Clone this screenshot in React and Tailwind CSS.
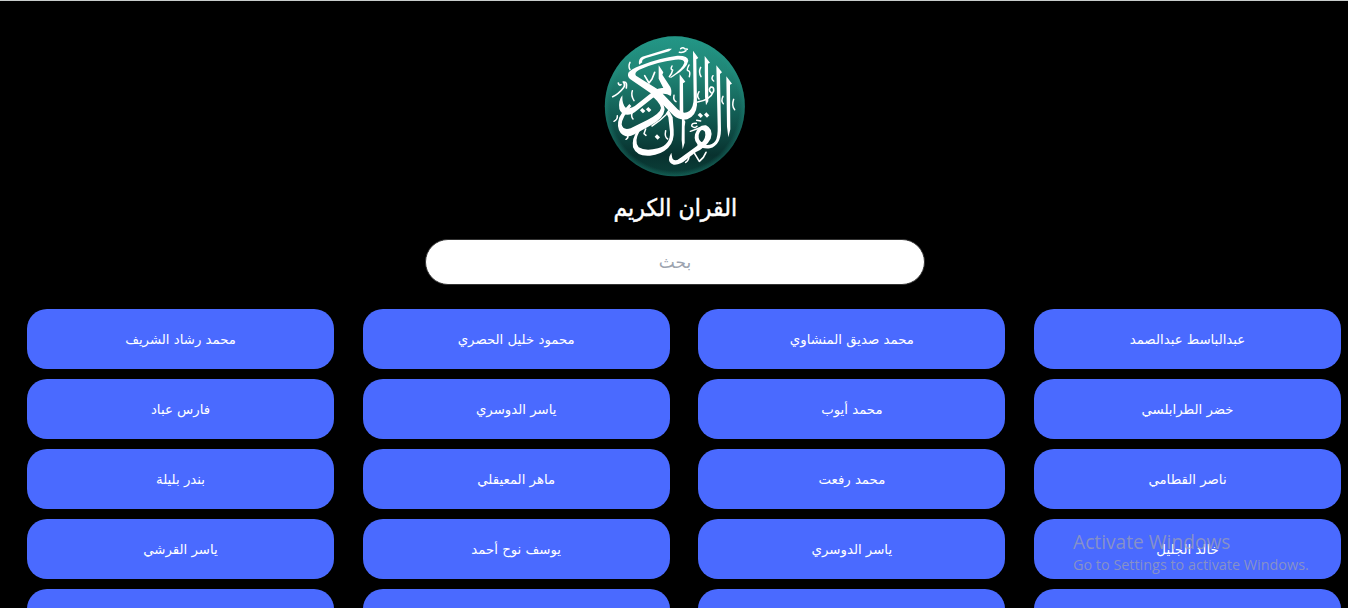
const rows = [
  ['عبدالباسط عبدالصمد', 'محمد صديق المنشاوي', 'محمود خليل الحصري', 'محمد رشاد الشريف'],
  ['خضر الطرابلسي', 'محمد أيوب', 'ياسر الدوسري', 'فارس عباد'],
  ['ناصر القطامي', 'محمد رفعت', 'ماهر المعيقلي', 'بندر بليلة'],
  ['خالد الجليل', 'ياسر الدوسري', 'يوسف نوح أحمد', 'ياسر القرشي'],
  ['', '', '', ''],
];

function Logo() {
  return (
    <svg viewBox="0 0 450 450" className="h-[150px] w-[150px]" role="img" aria-label="القران الكريم">
      <defs>
        <linearGradient id="disc" x1="0" y1="0" x2="0" y2="1">
          <stop offset="0" stopColor="#239686" />
          <stop offset="0.25" stopColor="#208676" />
          <stop offset="0.55" stopColor="#125d54" />
          <stop offset="0.85" stopColor="#08322f" />
          <stop offset="1" stopColor="#0b4039" />
        </linearGradient>
        <radialGradient id="rim">
          <stop offset="0.92" stopColor="#239686" stopOpacity="0" />
          <stop offset="1" stopColor="#239686" stopOpacity="0.35" />
        </radialGradient>
      </defs>
      <circle cx="224.5" cy="229" r="210" fill="url(#disc)" />
      <circle cx="224.5" cy="229" r="210" fill="url(#rim)" />
      <g fill="#fff">
        <path d="M279 62L295 84 289 88 291 225Q288 258 262 268 240 273 220 256L160 195 90 147Q80 138 86 127 92 118 120 107 180 83 232 77 264 76 265 92 260 115 226 135 211 147 210 142 248 116 253 98 252 86 226 89 170 95 118 119 101 128 108 137L178 181 233 238Q251 255 268 243 281 232 281 205Z" />
        <path d="M314 78L330 98 324 101 325 214 318 226 315 200Z" />
        <path d="M349 106L366 127 360 132 363 300Q362 346 330 355 307 358 290 345L299 340Q332 352 346 333 354 320 353 290Z" />
        <path d="M379 139L396 161 390 164 391 298 385 322 381 290Z" />
        <path d="M239 133L256 155 249 160 250 268 239 256Z" />
        <path d="M246 258L256 275 254 290 254 338 248 358 245 330Z" />
        <path d="M206 240L218 262 221 300Q224 335 204 354 183 374 150 377 110 380 99 352 95 325 113 301L119 303Q101 335 116 352 136 365 174 355 212 344 210 305L205 262 199 250Z" />
        <path d="M176 106L190 127 187 134 211 171Q217 184 212 198 190 184 163 200L104 247Q84 261 66 249 54 239 58 215 61 203 67 196 66 225 78 234 92 239 112 222L162 182Q177 172 190 174L176 146Z" />
        <path d="M155 184Q190 200 194 238 191 268 150 287L104 313Q79 327 62 309 48 291 58 262 68 242 88 222L94 228Q66 262 65 283 68 302 92 295L142 270Q181 250 183 234 178 214 152 196Z" />
        <path d="M117 104Q114 86 127 80L205 56 216 56 207 64 138 84Q123 90 127 97Z" />
        <path d="M208 380L214 368 217 385Q224 398 242 383L302 340Q320 325 315 305 303 292 296 315 294 335 310 338L300 348Q280 338 285 313 294 284 318 286 342 297 332 326 318 352 288 366L260 388Q240 406 221 404 203 398 208 380Z" />
      </g>
      <g fill="none" stroke="#fff" strokeLinecap="round" strokeLinejoin="round">
        <g strokeWidth="4.5">
          <path d="M242 56q7-6 12 0l8 2M238 67q12 2 20-5" />
          <path d="M55 159q2 9 8 5M70 156q7 9 0 18-14 18-32 26M73 156q9 0 6 18" strokeWidth="5" />
          <path d="M90 97q-6 12 0 22M52 257q1 12-10 17" />
          <path d="M134 137l13 22 9-12 8-20" strokeWidth="5" />
          <path d="M97 182q-5 14 5 30M97 246q-5 14 2 21" />
          <path d="M206 242l-8 12q-20 20-42 34M137 297l-5 14 6 5" />
          <path d="M197 302q-4 20 6 25M222 196q-3 14 6 19" />
          <path d="M216 108q-6 11 2 12-2 10-10 20M267 105q-9 17-2 17 7 2 3 18M302 112q-7 14 1 28" />
          <path d="M293 216q38-6 48-33 1-13-8-12-10 8 0 17" strokeWidth="5" />
          <path d="M339 137q-7 10 2 16M401 208q-7 20 3 31M369 199q-7 14 1 22M297 185q-8 14 0 22" />
          <path d="M289 280q-14-2-14 8 9 8 16 1M271 304l27-10M290 271l12 2" />
          <path d="M266 378q2 12-9 19M284 371l14 23 12-12 8-15" strokeWidth="5" />
          <path d="M83 316q3 8-5 12" />
        </g>
        <path d="M127 241l2 2M145 238l2 2M300 255l2 2M319 254l2 2M171 320l2 2" strokeWidth="10" strokeLinecap="square" />
      </g>
    </svg>
  );
}

export default function App() {
  return (
    <div className="relative flex h-[608px] w-full flex-col overflow-hidden border-t border-[#c8cccb] bg-black font-['DejaVu_Sans',sans-serif] text-white" dir="rtl">
      <header className="flex shrink-0 flex-col items-center pt-[29px] pl-0.5">
        <Logo />
        <h1 className="mt-2 flex h-10 scale-x-[0.92] items-center text-[24px] leading-10 font-medium whitespace-nowrap [-webkit-text-stroke:0.5px_white]">القران الكريم</h1>
        <input
          type="text"
          placeholder="بحث"
          className="mt-[11px] h-[46px] w-[500px] rounded-full border border-[#333] bg-white text-center text-[17px] text-black outline-none placeholder:text-[#9ca3af]"
        />
      </header>
      <main className="mt-6 grid shrink-0 grid-cols-4 gap-x-[28.67px] gap-y-2.5 pr-[7px] pl-[27px]">
        {rows.flat().map((name, i) => (
          <button key={i} className="flex h-[60px] items-center justify-center rounded-[20px] bg-[#4a6aff] pt-0.5 text-[13.3px] whitespace-nowrap">
            {name}
          </button>
        ))}
      </main>
      <div dir="ltr" className="pointer-events-none absolute top-[527px] left-[1073px] font-['Open_Sans',sans-serif] whitespace-nowrap text-[#9b9fb5]/75">
        <div className="text-[19.2px] leading-7">Activate Windows</div>
        <div className="text-[14.4px] leading-[18px]">Go to Settings to activate Windows.</div>
      </div>
    </div>
  );
}
